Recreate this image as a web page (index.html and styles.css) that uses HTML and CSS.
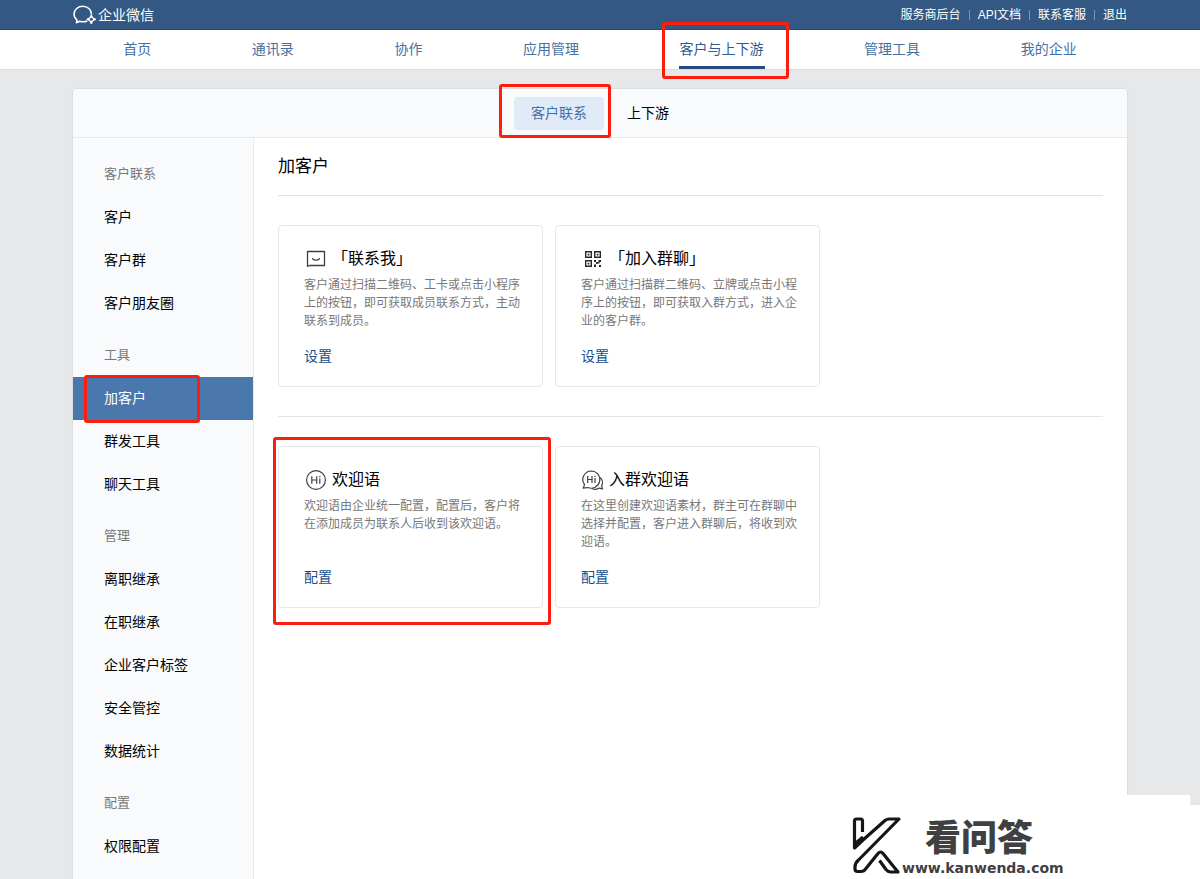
FILE: index.html
```html
<!DOCTYPE html>
<html lang="zh-CN">
<head>
<meta charset="utf-8">
<title>企业微信 - 加客户</title>
<link rel="stylesheet" href="styles.css">
</head>
<body>
<header class="topbar">
  <div class="wrap topbar-inner">
    <a class="brand" href="#">
      <svg width="24" height="20" viewBox="0 0 24 20" fill="none" stroke="#fff" stroke-width="1.5" stroke-linejoin="round">
        <path d="M18.500 9.500C18.500 4.600 14.500 1.200 9.800 1.200S1 4.600 1 9c0 2.500 1.200 4.500 3 6l-.6 2.700 3.200-1.500c2.600.9 5.400.8 7.600-.2"/>
        <path d="M18.300 10.500l1.100 2.700 2.700 1.100-2.700 1.100-1.100 2.700-1.100-2.700-2.700-1.100 2.700-1.100z" stroke-width="1.800"/>
        <circle cx="18.300" cy="14.300" r="1.500" fill="#335883" stroke="none"/>
      </svg>
      <span>企业微信</span>
    </a>
    <nav class="toplinks">
      <a href="#">服务商后台</a><a href="#">API文档</a><a href="#">联系客服</a><a href="#">退出</a>
    </nav>
  </div>
</header>
<div class="mainnav">
  <nav class="wrap mainnav-inner">
    <a href="#">首页</a>
    <a href="#">通讯录</a>
    <a href="#">协作</a>
    <a href="#">应用管理</a>
    <a class="current" href="#">客户与上下游<span class="mark mark-nav"></span></a>
    <a href="#">管理工具</a>
    <a href="#">我的企业</a>
  </nav>
</div>

<div class="wrap panel">
  <nav class="tabs">
    <a class="tab active" href="#">客户联系<span class="mark mark-tab"></span></a>
    <a class="tab" href="#">上下游</a>
  </nav>
  <div class="columns">
    <aside class="sidebar">
      <h2>客户联系</h2>
      <a href="#">客户</a>
      <a href="#">客户群</a>
      <a href="#">客户朋友圈</a>
      <h2>工具</h2>
      <a class="active" href="#">加客户<span class="mark mark-side"></span></a>
      <a href="#">群发工具</a>
      <a href="#">聊天工具</a>
      <h2>管理</h2>
      <a href="#">离职继承</a>
      <a href="#">在职继承</a>
      <a href="#">企业客户标签</a>
      <a href="#">安全管控</a>
      <a href="#">数据统计</a>
      <h2>配置</h2>
      <a href="#">权限配置</a>
    </aside>
    <main class="content">
      <h1>加客户</h1>
      <section class="cards">
        <article class="card">
          <h3>
            <svg width="24" height="24" viewBox="0 1 24 24" fill="none" stroke="#3c4046" stroke-width="1.300" stroke-linejoin="round" stroke-linecap="round">
              <path d="M3.500 20.300V5.500h17v14H5.300z"/>
              <path d="M8.500 12.700c1.800 1.900 5.200 1.900 7 0"/>
            </svg>
            <span>「联系我」</span>
          </h3>
          <p>客户通过扫描二维码、工卡或点击小程序上的按钮，即可获取成员联系方式，主动联系到成员。</p>
          <a href="#">设置</a>
        </article>
        <article class="card">
          <h3>
            <svg width="24" height="24" viewBox="0 1 24 24" fill="#26282c">
              <path d="M4.700 5.700h5.600v5.600H4.700zM13.700 5.700h5.600v5.600h-5.600zM4.700 14.700h5.600v5.600H4.700z" fill="none" stroke="#26282c" stroke-width="1.400"/>
              <path d="M6.700 7.700h1.700v1.700H6.700zM15.700 7.700h1.700v1.700h-1.700zM6.700 16.700h1.700v1.700H6.700z"/>
              <path d="M13 14h2v2h-2zM17.500 14H20v2h-1.500v1.500h-2V16h1zM15 16h1.500v2H15zM13 18.500h2V21h-2zM18 19h2v2h-2z"/>
            </svg>
            <span>「加入群聊」</span>
          </h3>
          <p>客户通过扫描群二维码、立牌或点击小程序上的按钮，即可获取入群方式，进入企业的客户群。</p>
          <a href="#">设置</a>
        </article>
      </section>
      <section class="cards">
        <article class="card">
          <h3>
            <svg width="24" height="24" viewBox="0 0 24 24" fill="none" stroke="#3c4046" stroke-width="1.200">
              <circle cx="12" cy="12" r="9.400"/>
              <path d="M7.800 8.300v7.400M12.700 8.300v7.400M7.800 12h4.900M15.800 10.500v5.200M15.800 8v1.300"/>
            </svg>
            <span>欢迎语</span>
          </h3>
          <p>欢迎语由企业统一配置，配置后，客户将在添加成员为联系人后收到该欢迎语。</p>
          <a href="#">配置</a>
          <span class="mark mark-card"></span>
        </article>
        <article class="card">
          <h3>
            <svg width="24" height="24" viewBox="0 1 24 24" fill="none" stroke="#3c4046" stroke-width="1.200" stroke-linejoin="round">
              <path d="M10.300 4a8.600 8.600 0 1 1-3.500 16.500L2.200 21.200l1.300-3.500A8.600 8.600 0 0 1 10.300 4z"/>
              <path d="M19 10.500c2.500 2 3.200 5.500 1.600 8.200l1 3.200-3.300-.8c-2.300 1.500-5 1.600-7.300.3"/>
              <path d="M6.700 9v7M11 9v7M6.700 12.500H11M14 11v5M14 8.700v1.200"/>
            </svg>
            <span>入群欢迎语</span>
          </h3>
          <p>在这里创建欢迎语素材，群主可在群聊中选择并配置，客户进入群聊后，将收到欢迎语。</p>
          <a href="#">配置</a>
        </article>
      </section>
    </main>
  </div>
</div>

<div class="watermark">
  <svg width="50" height="62" viewBox="0 0 50 62" fill="none" stroke="#161616" stroke-width="3.200" stroke-linejoin="round">
    <path d="M10.500 17V6Q10.500 4 8.500 4H4.500Q2.500 4 2.500 6V33L11 25L33 5.500Q35 4 37 4H47L6.500 45Q3 48 3 52V54Q3 56.500 5.500 56.500H9Q12 56.500 13.500 54L26 38.500Q28.500 35.500 31 38.500L46 57H39Q36 57 34 54.500L27.500 45.500"/>
    <path d="M2.500 29L11 22" stroke-width="3"/>
  </svg>
  <div class="watermark-text">
    <strong>看问答</strong>
    <span>www.kanwenda.com</span>
  </div>
</div>
</body>
</html>
```
FILE: styles.css
```css
* {
  box-sizing: border-box;
}

body {
  margin: 0;
  min-height: 100vh;
  display: flex;
  flex-direction: column;
  position: relative;
  overflow-x: hidden;
  background: #e7e8ea;
  color: #000;
  font-family: "Liberation Sans", "Noto Sans CJK SC", sans-serif;
  font-size: 14px;
  line-height: 20px;
}

a {
  color: inherit;
  text-decoration: none;
}

h1, h2, h3, p {
  margin: 0;
  font-weight: 400;
}

.wrap {
  width: calc(100% - 32px);
  max-width: 1054px;
  margin: 0 auto;
}

.topbar {
  background: #335883;
  border-bottom: 1px solid #264a76;
  color: #fff;
}

.topbar-inner {
  display: flex;
  justify-content: space-between;
  align-items: center;
  height: 29px;
}

.brand {
  display: flex;
  align-items: center;
  gap: 1px;
}

.toplinks {
  display: flex;
  font-size: 12px;
}

.toplinks a + a {
  display: flex;
  align-items: center;
}

.toplinks a + a::before {
  content: "";
  width: 1px;
  height: 10px;
  margin: 0 8px;
  background: #7f97b3;
}

.mainnav {
  background: #fff;
  border-bottom: 1px solid #dadbdd;
}

.mainnav-inner {
  display: flex;
  justify-content: space-around;
  color: #4571a3;
}

.mainnav-inner a {
  position: relative;
  line-height: 39px;
}

.mainnav-inner .current {
  color: #2f5b8f;
}

.current::after {
  content: "";
  position: absolute;
  left: -1px;
  right: -1px;
  bottom: 0;
  height: 3px;
  background: #264c7d;
}

.panel {
  flex: 1;
  display: flex;
  flex-direction: column;
  margin-top: 19px;
  background: #fff;
  border-radius: 4px 4px 0 0;
  box-shadow: 0 0 2px rgba(0, 0, 0, 0.16);
}

.tabs {
  display: flex;
  justify-content: center;
  align-items: center;
  gap: 6px;
  height: 49px;
  background: #f8fafc;
  border-bottom: 1px solid #e6e9ee;
  border-radius: 4px 4px 0 0;
}

.tab {
  position: relative;
  padding: 0 17px;
  line-height: 33px;
  border-radius: 4px;
}

.tab.active {
  background: #e0ebf7;
  color: #3f6fab;
}

.columns {
  flex: 1;
  display: flex;
}

.sidebar {
  flex: 0 0 181px;
  padding-top: 6px;
  background: #f8fafc;
  border-right: 1px dotted #d9dee6;
}

.sidebar h2 {
  padding: 19px 31px 11px;
  color: #787878;
  font-size: 13px;
  line-height: 22px;
}

.sidebar a {
  display: block;
  position: relative;
  padding: 0 31px;
  line-height: 43px;
}

.sidebar .active {
  background: #4a77ac;
  color: #fff;
}

.content {
  flex: 1;
  min-width: 0;
  padding: 0 24px;
}

.content h1 {
  padding-top: 1px;
  font-size: 17px;
  line-height: 56px;
  border-bottom: 1px solid #e0e1e4;
}

.cards {
  display: flex;
  flex-wrap: wrap;
  gap: 12px;
  padding: 29px 0;
}

.cards + .cards {
  border-top: 1px solid #e4e5e8;
}

.card {
  position: relative;
  width: 265px;
  padding: 21px 20px 20px 25px;
  border: 1px solid #e4e6e9;
  border-radius: 4px;
}

.card h3 {
  display: flex;
  align-items: center;
  gap: 4px;
  font-size: 16px;
  line-height: 24px;
}

.card p {
  min-height: 54px;
  margin: 5px 0 16px;
  color: #787878;
  font-size: 12px;
  line-height: 18px;
}

.card a {
  display: block;
  color: #154f8c;
}

.mark {
  position: absolute;
  border: 3px solid #fc1d0e;
  border-radius: 3px;
  pointer-events: none;
}

.mark-nav {
  inset: -8px -25px -10px -18px;
  z-index: 1;
}

.mark-tab {
  inset: -13px -7px -8px -15px;
}

.mark-side {
  inset: -2px 53px -3px 11px;
}

.mark-card {
  inset: -10px -9px -18px -6px;
  z-index: 1;
}

.watermark {
  position: absolute;
  right: 0;
  bottom: 0;
  display: flex;
  width: 360px;
  height: 84px;
  padding: 20px 0 0 12px;
  background: #fff;
  clip-path: polygon(0 0, 350px 0, 350px 10px, 100% 10px, 100% 100%, 0 100%);
}

.watermark-text {
  display: flex;
  flex-direction: column;
  padding-top: 2px;
  color: #404040;
}

.watermark-text strong {
  padding-left: 23px;
  font-size: 36px;
  font-weight: 900;
  line-height: 44px;
}

.watermark-text span {
  font-family: "DejaVu Sans", sans-serif;
  font-size: 14px;
  font-weight: 700;
  line-height: 14px;
}
```
